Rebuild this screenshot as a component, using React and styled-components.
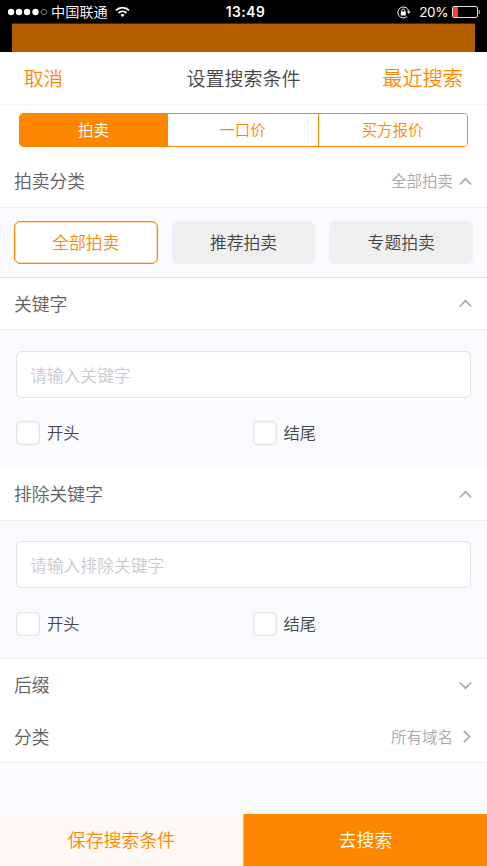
import React from "react";
import styled, { createGlobalStyle } from "styled-components";

const ORANGE = "#ff8700";

const GlobalStyle = createGlobalStyle`
  * { box-sizing: border-box; }
  body {
    margin: 0;
    background: #fafbff;
    font-family: Roboto, "Noto Sans CJK SC", sans-serif;
    font-weight: 350;
  }
  button, input { font: inherit; }
  button { border: 0; padding: 0; background: none; cursor: pointer; }
`;

const CJK = `"Noto Sans CJK SC", sans-serif`;

const Screen = styled.div`
  width: 487px;
  height: 866px;
  display: flex;
  flex-direction: column;
  overflow: hidden;
  background: #fafbff;
  font-family: ${CJK};
`;

const StatusBar = styled.div`
  height: 23px;
  flex: none;
  display: grid;
  grid-template-columns: 1fr auto 1fr;
  align-items: center;
  padding: 1px 7px 0 8px;
  background: #000;
  color: #fff;
`;

const StatusGroup = styled.div`
  display: flex;
  align-items: center;
  height: 22px;
  justify-content: ${(p) => (p.$end ? "flex-end" : "flex-start")};
`;

const Carrier = styled.span`
  margin: 0 7px 0 4px;
  padding-bottom: 1px;
  font-size: 14.2px;
  line-height: 21px;
`;

const Clock = styled.span`
  padding-left: 3px;
  font-family: Inter, sans-serif;
  font-weight: 600;
  font-size: 13.8px;
  letter-spacing: 0.5px;
  line-height: 22px;
`;

const Percent = styled.span`
  margin: 0 4px 0 8px;
  font-family: Inter, sans-serif;
  font-size: 13.6px;
  letter-spacing: -0.5px;
  font-weight: 400;
  line-height: 22px;
`;

const Backdrop = styled.div`
  height: 29px;
  flex: none;
  padding: 0 12px;
  background: #000;
`;

const BackdropPage = styled.div`
  height: 100%;
  background: #b35f00;
  border-top: 1px solid #4a2800;
`;

const Header = styled.header`
  height: 53px;
  flex: none;
  display: grid;
  grid-template-columns: 1fr auto 1fr;
  align-items: center;
  padding: 0 24px 1px;
  background: #fff;
  border-bottom: 1px solid #f5f5f5;
`;

const Title = styled.h1`
  margin: 0;
  font-size: 19px;
  line-height: 28px;
  font-weight: inherit;
  color: #444;
`;

const HeaderAction = styled.button`
  justify-self: ${(p) => (p.$end ? "end" : "start")};
  font-size: ${(p) => (p.$end ? 20.2 : 19.6)}px;
  line-height: 28px;
  color: ${ORANGE};
`;

const TabArea = styled.div`
  flex: none;
  height: 50px;
  padding: 8px 19px 0;
  background: #fff;
`;

const Tabs = styled.div`
  height: 34px;
  display: grid;
  grid-template-columns: 148px 150px 1fr;
  border: 1px solid ${ORANGE};
  border-radius: 4px;
  overflow: hidden;
`;

const Tab = styled.button`
  padding: 0 1px 2px 0;
  font-size: 15.4px;
  line-height: 30px;
  color: ${(p) => (p.$active ? "#fff" : ORANGE)};
  background: ${(p) => (p.$active ? ORANGE : "#fff")};
  & + & + & { border-left: 1px solid ${ORANGE}; }
`;

const SectionRow = styled.div`
  height: ${(p) => p.$height}px;
  flex: none;
  display: flex;
  align-items: center;
  padding: 0 15px 2px 14px;
  background: #fff;
  border-top: ${(p) => (p.$topLine ? `1px solid ${p.$topLine}` : "0")};
  border-bottom: ${(p) => (p.$bottomLine ? "1px solid #ebedf0" : "0")};
`;

const SectionTitle = styled.h2`
  flex: 1;
  margin: 0;
  font-size: 17.8px;
  line-height: 26px;
  font-weight: inherit;
  color: #606060;
`;

const SectionValue = styled.span`
  margin-right: 6px;
  font-size: 15.5px;
  line-height: 24px;
  color: #aaa;
`;

const ChevronIcon = styled.svg`
  display: block;
  width: 13px;
  height: 13px;
  margin-top: 2px;
  fill: none;
  stroke: #aaa;
  stroke-width: 1.7;
`;

const ChoicePanel = styled.div`
  height: 69px;
  flex: none;
  display: grid;
  grid-template-columns: repeat(3, 1fr);
  column-gap: 14px;
  padding: 13px 14px;
`;

const Choice = styled.button`
  height: 43px;
  padding-bottom: 2px;
  border-radius: 6px;
  font-size: 16.8px;
  line-height: 38px;
  color: ${(p) => (p.$active ? ORANGE : "#444")};
  background: ${(p) => (p.$active ? "#fff" : "#efefef")};
  border: 1px solid ${(p) => (p.$active ? ORANGE : "#f1f1f1")};
  box-shadow: ${(p) => (p.$active ? "inset 0 0 0 0.5px #ffb45f" : "none")};
`;

const KeywordPanel = styled.div`
  height: ${(p) => (p.$compact ? 137 : 138)}px;
  flex: none;
  display: flex;
  flex-direction: column;
  justify-content: space-between;
  padding: ${(p) => (p.$compact ? "20px 16px 22px" : "21px 16px 23px")};
`;

const TextInput = styled.input`
  display: block;
  width: 455px;
  height: 47px;
  padding: 0 13px;
  border: 1px solid #e3e3e3;
  border-radius: 5px;
  box-shadow: inset 0 0 1px #e3e3e3;
  background: #fff;
  outline: none;
  font-size: 16.8px;
  color: #444;
  &::placeholder { color: #c9c9d0; opacity: 1; }
`;

const CheckRow = styled.div`
  display: grid;
  grid-template-columns: 236.5px 1fr;
`;

const CheckLabel = styled.label`
  display: flex;
  align-items: center;
  height: 24px;
  gap: 7px;
  font-size: 16.3px;
  line-height: 22px;
  color: #444;
`;

const CheckText = styled.span`
  padding-bottom: 2px;
`;

const CheckBox = styled.input`
  appearance: none;
  width: 24px;
  height: 24px;
  margin: 0;
  border: 1px solid #e2e2e2;
  border-radius: 4px;
  background: #fff;
  box-shadow: inset 0 0 3px #eaeaea;
`;

const Footer = styled.footer`
  height: 52px;
  flex: none;
  margin-top: auto;
  display: grid;
  grid-template-columns: 243px 244px;
`;

const FooterButton = styled.button`
  padding-bottom: 2px;
  font-size: 17.9px;
  line-height: 50px;
  color: ${(p) => (p.$primary ? "#fff" : ORANGE)};
  background: ${(p) => (p.$primary ? ORANGE : "#fff9f5")};
  border-left: ${(p) => (p.$primary ? "1px solid #ffb563" : "0")};
`;

const paths = {
  up: "M0.8 9.5 L6.5 3.8 L12.2 9.5",
  down: "M0.8 3.5 L6.5 9.2 L12.2 3.5",
  right: "M4.8 0.8 L10.5 6.5 L4.8 12.2",
};

const Chevron = ({ direction }) => (
  <ChevronIcon viewBox="0 0 13 13" aria-hidden="true">
    <path d={paths[direction]} />
  </ChevronIcon>
);

const SignalIcon = () => (
  <svg width="39" height="8" viewBox="0 0 39 8" fill="#fff" aria-hidden="true">
    {[3, 11, 19, 27.5].map((x) => <circle key={x} cx={x} cy="4" r="3.2" />)}
    <circle cx="35.8" cy="4" r="2.7" fill="none" stroke="#bbb" strokeWidth=".7" />
  </svg>
);

const WifiIcon = () => (
  <svg width="15" height="12" viewBox="0 0 15 12" fill="none" stroke="#fff" strokeWidth="1.8" aria-hidden="true">
    <path d="M1 4.3 C4.6 .6 10.4 .6 14 4.3" />
    <path d="M3.5 7 C5.8 4.8 9.2 4.8 11.5 7" />
    <path d="M7.5 11 L5.3 8.8 C6.5 7.7 8.5 7.7 9.7 8.8 Z" fill="#fff" stroke="none" />
  </svg>
);

const RotationLockIcon = () => (
  <svg width="14" height="13" viewBox="0 0 14 13" fill="none" stroke="#fff" aria-hidden="true">
    <path d="M10.2 10.4 A5.5 5.5 0 1 1 11.8 5.6" strokeWidth="1" />
    <path d="M9.8 5.6 H13.8 L11.8 7.8 Z" fill="#fff" stroke="none" />
    <rect x="3.8" y="5.5" width="5" height="4" fill="#fff" stroke="none" />
    <path d="M4.8 6 V4.5 A1.5 1.5 0 0 1 7.8 4.5 V6" strokeWidth=".9" />
  </svg>
);

const BatteryIcon = () => (
  <svg width="28" height="12" viewBox="0 0 28 12" aria-hidden="true">
    <rect x=".5" y=".5" width="25" height="11" rx="1.5" fill="none" stroke="#ddd" />
    <rect x="1" y="1" width="5" height="10" fill="#ff3b30" />
    <path d="M27 4 Q28 6 27 8 Z" fill="#ddd" stroke="#ddd" strokeWidth=".5" />
  </svg>
);

const Section = ({ title, value, direction, height, topLine, bottomLine }) => (
  <SectionRow $height={height} $topLine={topLine} $bottomLine={bottomLine}>
    <SectionTitle>{title}</SectionTitle>
    {value && <SectionValue>{value}</SectionValue>}
    <Chevron direction={direction} />
  </SectionRow>
);

const KeywordFields = ({ placeholder, compact }) => (
  <KeywordPanel $compact={compact}>
    <TextInput placeholder={placeholder} />
    <CheckRow>
      {["开头", "结尾"].map((label) => (
        <CheckLabel key={label}>
          <CheckBox type="checkbox" />
          <CheckText>{label}</CheckText>
        </CheckLabel>
      ))}
    </CheckRow>
  </KeywordPanel>
);

export default function App() {
  return (
    <>
      <GlobalStyle />
      <Screen>
        <StatusBar>
          <StatusGroup>
            <SignalIcon />
            <Carrier>中国联通</Carrier>
            <WifiIcon />
          </StatusGroup>
          <Clock>13:49</Clock>
          <StatusGroup $end>
            <RotationLockIcon />
            <Percent>20%</Percent>
            <BatteryIcon />
          </StatusGroup>
        </StatusBar>
        <Backdrop><BackdropPage /></Backdrop>
        <Header>
          <HeaderAction>取消</HeaderAction>
          <Title>设置搜索条件</Title>
          <HeaderAction $end>最近搜索</HeaderAction>
        </Header>
        <TabArea>
          <Tabs>
            <Tab $active>拍卖</Tab>
            <Tab>一口价</Tab>
            <Tab>买方报价</Tab>
          </Tabs>
        </TabArea>
        <Section title="拍卖分类" value="全部拍卖" direction="up" height={53} bottomLine />
        <ChoicePanel>
          <Choice $active>全部拍卖</Choice>
          <Choice>推荐拍卖</Choice>
          <Choice>专题拍卖</Choice>
        </ChoicePanel>
        <Section title="关键字" direction="up" height={53} topLine="#dcdfe2" bottomLine />
        <KeywordFields placeholder="请输入关键字" />
        <Section title="排除关键字" direction="up" height={53} bottomLine />
        <KeywordFields placeholder="请输入排除关键字" compact />
        <Section title="后缀" direction="down" height={53} topLine="#e9ebed" />
        <Section title="分类" value="所有域名" direction="right" height={52} bottomLine />
        <Footer>
          <FooterButton>保存搜索条件</FooterButton>
          <FooterButton $primary>去搜索</FooterButton>
        </Footer>
      </Screen>
    </>
  );
}
